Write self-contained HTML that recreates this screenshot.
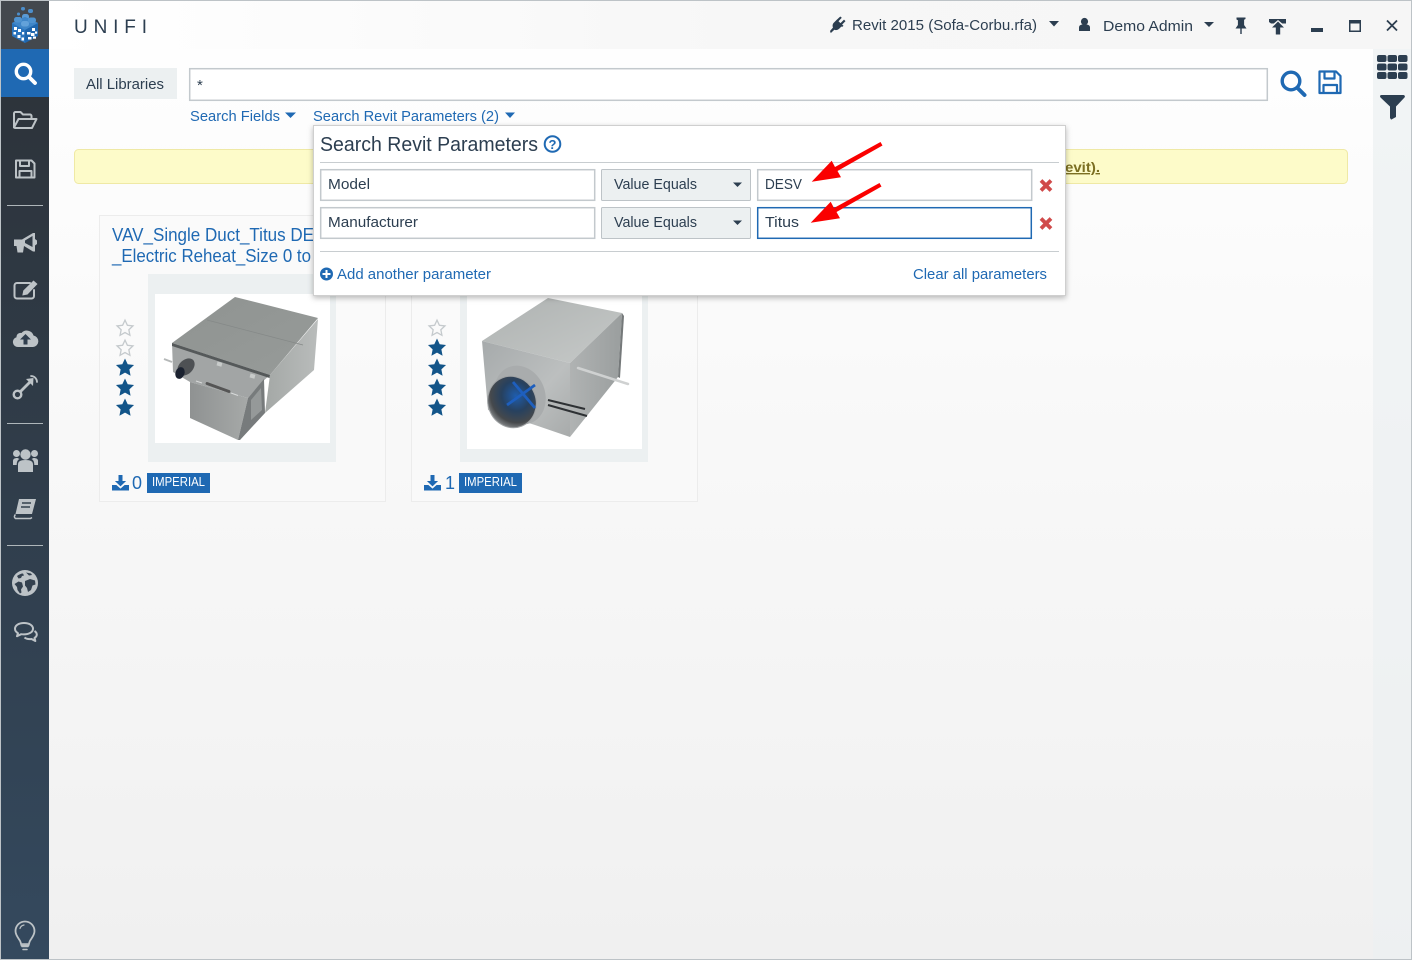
<!DOCTYPE html>
<html lang="en">
<head>
<meta charset="utf-8">
<title>UNIFI</title>
<style>
html,body{margin:0;padding:0;width:1412px;height:960px;overflow:hidden;background:#fff}
svg{display:block}
text{font-family:"Liberation Sans",sans-serif;white-space:pre}
</style>
</head>
<body>
<svg xmlns="http://www.w3.org/2000/svg" width="1412" height="960" viewBox="0 0 1412 960">
<defs>
<linearGradient id="bg" x1="0" y1="0" x2="0" y2="1"><stop offset="0" stop-color="#ffffff"/><stop offset="1" stop-color="#f0f0f0"/></linearGradient>
<linearGradient id="side" x1="0" y1="0" x2="0" y2="1"><stop offset="0" stop-color="#2c3137"/><stop offset="1" stop-color="#34495e"/></linearGradient>
<linearGradient id="top" x1="0" y1="0" x2="1" y2="0"><stop offset="0" stop-color="#ffffff"/><stop offset=".5" stop-color="#f7f7f7"/><stop offset="1" stop-color="#f6f6f6"/></linearGradient>
<linearGradient id="d1t" x1="0" y1="0" x2="1" y2="1"><stop offset="0" stop-color="#8f9391"/><stop offset="1" stop-color="#979b99"/></linearGradient>
<linearGradient id="d1r" x1="0" y1="0" x2="1" y2="0"><stop offset="0" stop-color="#a4a8a6"/><stop offset="1" stop-color="#b9bcbb"/></linearGradient>
<linearGradient id="d1f" x1="0" y1="0" x2="1" y2="0"><stop offset="0" stop-color="#8f9292"/><stop offset="1" stop-color="#a6a9a8"/></linearGradient>
<linearGradient id="d2t" x1="0" y1="0" x2="1" y2="1"><stop offset="0" stop-color="#aeb2b1"/><stop offset="1" stop-color="#c6c9c8"/></linearGradient>
<linearGradient id="d2l" x1="0" y1="0" x2="1" y2="1"><stop offset="0" stop-color="#a6aaab"/><stop offset=".6" stop-color="#bcbfbf"/><stop offset="1" stop-color="#a8abab"/></linearGradient>
<linearGradient id="d2r" x1="0" y1="0" x2="1" y2="0"><stop offset="0" stop-color="#b0b3b3"/><stop offset="1" stop-color="#9a9e9e"/></linearGradient>
<radialGradient id="d2h" cx=".62" cy=".42" r=".65"><stop offset="0" stop-color="#1f5dac"/><stop offset=".45" stop-color="#27415f"/><stop offset=".8" stop-color="#46494c"/><stop offset="1" stop-color="#85888a"/></radialGradient>
<filter id="sh" x="-3%" y="-5%" width="106%" height="112%"><feDropShadow dx="0" dy="2" stdDeviation="3" flood-color="#000" flood-opacity=".28"/></filter>
<polygon id="star" points="0,-9.5 2.7,-3.73 9.04,-2.94 4.37,1.43 5.58,7.69 0,4.6 -5.58,7.69 -4.37,1.43 -9.04,-2.94 -2.7,-3.73"/>
<g id="dl" fill="#1f69b3">
  <path d="M6.5 0h4v6h3.6L8.5 11.4 2.9 6h3.6z"/>
  <path d="M0 10h4.4l4.1 3.6L12.6 10H17v5.5H0z"/>
</g>
</defs>

<!-- page -->
<rect width="1412" height="960" fill="url(#bg)"/>
<rect x="49" y="1" width="1362" height="48" fill="url(#top)"/>
<rect x="1373" y="49" width="38" height="910" fill="#ecf0f1" opacity=".75"/>

<!-- sidebar -->
<rect x="1" y="1" width="48" height="958" fill="url(#side)"/>
<rect x="1" y="1" width="48" height="48" fill="#43484e"/>
<rect x="1" y="49" width="48" height="48" fill="#1f69b3"/>

<!-- logo -->
<g>
  <rect x="21" y="7" width="4" height="3.500" rx="1.700" fill="#4c8ecb"/>
  <rect x="28" y="9" width="5" height="4" rx="1.900" fill="#4c8ecb"/>
  <rect x="17" y="12.500" width="3" height="3" rx="1.400" fill="#4c8ecb"/>
  <rect x="22" y="14" width="7" height="6" rx="2.500" fill="#5a9ad4"/>
  <polygon points="25,17 38,23 38,36 25,43 12,36 12,23" fill="#2a74bd"/>
  <polygon points="25,17 38,23 25,30 12,23" fill="#3f86c8"/>
  <rect x="14" y="17" width="8" height="5.500" rx="2.500" fill="#4f93d0"/>
  <rect x="28" y="17.500" width="8" height="5.500" rx="2.500" fill="#4f93d0"/>
  <rect x="21" y="21" width="8" height="5.500" rx="2.500" fill="#63a2da"/>
  <polygon points="25,30 38,23 38,36 25,43" fill="#1f66ad"/>
  <g fill="#fff">
    <rect x="14" y="27" width="3" height="3"/><rect x="18" y="29" width="3" height="3"/><rect x="22" y="32" width="2.200" height="2.500"/>
    <rect x="13.500" y="32" width="2.500" height="2.500"/><rect x="17.500" y="35" width="3" height="3"/><rect x="21.500" y="37.500" width="2.500" height="3"/>
    <rect x="27" y="32" width="3.500" height="2.500"/><rect x="32" y="28" width="3" height="3"/><rect x="31" y="33" width="3.500" height="3"/>
    <rect x="35" y="31.500" width="2.200" height="2.200"/><rect x="28" y="37" width="3.500" height="2.500"/><rect x="33" y="36.500" width="3" height="2.200"/>
  </g>
</g>

<!-- search nav icon -->
<g fill="none" stroke="#fff">
  <circle cx="23.500" cy="71.500" r="7.200" stroke-width="3.400"/>
  <path d="M29 77l6 6" stroke-width="3.800" stroke-linecap="round"/>
</g>

<g fill="none" stroke="#bdc3c7" stroke-width="2" stroke-linejoin="round" stroke-linecap="round">
  <!-- folder -->
  <path d="M14 127V113.500a1.500 1.500 0 0 1 1.500-1.500h5l2.500 2.500h7a1.500 1.500 0 0 1 1.500 1.500V119"/>
  <path d="M14 127.500l4.500-8.500H36.500l-4.500 9H15z"/>
  <!-- save -->
  <path d="M16 160.500h15.500l3 3v14h-18.500z"/>
  <path d="M20 160.500v5.500h9v-5.500M19.500 177.500v-6.500h12v6.500"/>
  <!-- edit -->
  <path d="M30 283h-13a2.500 2.500 0 0 0-2.500 2.500v10.500a2.500 2.500 0 0 0 2.500 2.500h14.500a2.500 2.500 0 0 0 2.500-2.500v-6"/>
</g>
<!-- edit pencil -->
<path d="M33.500 280.500l4 3.500-10 10.500-5.200 1 1-5z" fill="#bdc3c7"/>
<!-- sidebar separators -->
<g fill="#bdc3c7" opacity=".9">
  <rect x="7" y="205" width="36" height="1"/><rect x="7" y="423" width="36" height="1"/><rect x="7" y="545" width="36" height="1"/>
</g>
<g fill="#bdc3c7">
  <!-- bullhorn -->
  <path d="M14 239.500h8l11-6.500h2v6l2 1.500v3.500l-2 1.500v6h-2l-9-5.500-1 6.500h-5.500l-1-6.500h-2.500z"/>
  <path d="M25 240.500l7.500-4.500v11l-7.500-4z" fill="#2f3a45"/>
  <!-- cloud -->
  <path d="M18 347a5 5 0 0 1-1.500-9.800 4 4 0 0 1 5-4.200 7 7 0 0 1 12 2.500 5.800 5.800 0 0 1-.5 11.500z"/>
  <path d="M25.500 334l5.500 5.500h-3.500v5h-4v-5H20z" fill="#2f3e4e"/>
  <!-- users -->
  <circle cx="25.500" cy="454.500" r="5.200"/><circle cx="16.500" cy="453.500" r="3.500"/><circle cx="34.500" cy="453.500" r="3.500"/>
  <path d="M18 472v-7.500c0-3 2.300-4.500 7.500-4.500s7.500 1.500 7.500 4.500V472z"/>
  <path d="M13 465v-4c0-2 1.500-3 4.500-3l2 1c-2 1-2.800 2.800-2.800 6zM38 465v-4c0-2-1.500-3-4.500-3l-2 1c2 1 2.800 2.800 2.800 6z"/>
  <!-- book -->
  <path d="M19 499h17l-4 15H15.500z"/>
  <path d="M15.500 514.500c-1.500 1.300-1.500 3 0 4h15l1.500-1" fill="none" stroke="#bdc3c7" stroke-width="1.500"/>
  <!-- globe -->
  <circle cx="25" cy="583" r="13"/>
</g>
<path d="M22 503h9M21 507h9" stroke="#34434f" stroke-width="1.500"/>
<g fill="#34414f">
  <path d="M17 576c2-1.500 4-2.500 6-2.500l1 2-2 .5-1 2-2.500.5zM26 572.500l5 1 1 1.500-3 .5zM14.500 584l4-2.500 3.500 1 1 4-2 3 .5 3-1.500 1-2.500-3.500-.5-3zM25 581l5-2 5 1.500.5 4-3 1-1.500 4.500-3 2-1-4-2-2.500z"/>
</g>
<!-- key / arrow link -->
<g fill="none" stroke="#bdc3c7" stroke-linecap="round" stroke-linejoin="round">
  <circle cx="17.500" cy="394.500" r="3.800" stroke-width="2.400"/>
  <path d="M21 391l9-9" stroke-width="2.800"/>
  <path d="M31 376a6 6 0 0 1 6 6" stroke-width="1.800"/>
</g>
<polygon points="33.500,378 33,386 26,379" fill="#bdc3c7"/>
<!-- comments -->
<g fill="none" stroke="#bdc3c7" stroke-width="2" stroke-linejoin="round">
  <path d="M24 623c-5.500 0-9 2.500-9 5.800 0 1.800 1 3.300 3 4.400l-1 3 4.200-2c1 .2 1.800.2 2.800.2 5.500 0 9-2.600 9-5.700s-3.500-5.700-9-5.700z"/>
  <path d="M34.500 631c1.500 1 2.300 2.200 2.300 3.500 0 1.500-1 2.700-2.300 3.500l.8 3-3.800-2c-3 .3-5.500-.2-7-1.500"/>
</g>
<!-- bulb -->
<g fill="none" stroke="#bdc3c7" stroke-linecap="round" transform="translate(0 1.500)">
  <path d="M21.500 944l-1-3.500c-.6-2.500-5-6-5-11a9.500 9.500 0 0 1 19 0c0 5-4.400 8.500-5 11l-1 3.500z" stroke-width="1.800"/>
  <path d="M20 927a5 5 0 0 1 4-3.500" stroke-width="1.200"/>
  <path d="M22 942.500h6M22 945h6M23 948h4" stroke-width="1.500"/>
</g>

<!-- window frame -->
<rect x=".5" y=".5" width="1411" height="959" fill="none" stroke="#bdc3c7"/>

<!-- header -->
<text x="74" y="33" font-size="19" fill="#2c3e50" textLength="73">UNIFI</text>
<g fill="#2c3e50">
  <!-- plug -->
  <path d="M830 31l3-3.500c-.8-2-.3-3.700 1-5l2.500-2.500 3.800-3.500 1.500 1.300-3.300 3.500 2 1.800 3.500-3.500 1.500 1.500-3.400 3.500 1.400 1.200-1 1-1.200-.2-2 2c-1.500 1.500-3.300 1.800-5 1.200l-3.500 3.300z"/>
  <polygon points="1049,21 1059,21 1054,26.500"/>
  <!-- user -->
  <circle cx="1084.500" cy="21.500" r="3.600"/>
  <path d="M1079 31v-3.500c0-2 1.800-3.200 5.500-3.200s5.500 1.200 5.500 3.200V31z"/>
  <polygon points="1204,22 1214,22 1209,27"/>
  <!-- pin -->
  <path d="M1236.500 17.500h9v1.500l-1.400.8V25l2.400 3.500H1235.500l2.400-3.500v-4.700l-1.400-.8z"/>
  <rect x="1240.300" y="28" width="1.400" height="6"/>
  <!-- push up -->
  <path d="M1269 19h17v4.500h-3.800l-4.200-3.500-4.200 3.500H1271l-2-1.500z"/>
  <path d="M1278 21.500l6 6h-3.800v7h-4.400v-7H1272z"/>
  <!-- minimize -->
  <rect x="1311" y="28" width="12" height="4"/>
  <!-- maximize -->
  <path d="M1349 20h12v12h-12zM1350.500 23.500v7h9v-7z" fill-rule="evenodd"/>
</g>
<path d="M1387 20.500l10 10M1397 20.500l-10 10" stroke="#2c3e50" stroke-width="1.800" fill="none"/>
<text x="852" y="30" font-size="15" fill="#2c3e50" textLength="185" lengthAdjust="spacingAndGlyphs">Revit 2015 (Sofa-Corbu.rfa)</text>
<text x="1103" y="31" font-size="15" fill="#2c3e50" textLength="90" lengthAdjust="spacingAndGlyphs">Demo Admin</text>

<!-- right strip -->
<g fill="#2c3e50">
  <rect x="1377" y="55" width="9.500" height="7" rx="2"/><rect x="1387.500" y="55" width="9.500" height="7" rx="2"/><rect x="1398" y="55" width="9.500" height="7" rx="2"/>
  <rect x="1377" y="63.500" width="9.500" height="7" rx="2"/><rect x="1387.500" y="63.500" width="9.500" height="7" rx="2"/><rect x="1398" y="63.500" width="9.500" height="7" rx="2"/>
  <rect x="1377" y="72" width="9.500" height="7" rx="2"/><rect x="1387.500" y="72" width="9.500" height="7" rx="2"/><rect x="1398" y="72" width="9.500" height="7" rx="2"/>
  <path d="M1380 96.500a1.500 1.500 0 0 1 1.500-1.500h22a1.500 1.500 0 0 1 1 2.500l-8.500 9v10.500l-4.500 2.500h-.5l-1-1.500v-11.500l-9.500-9z"/>
</g>

<!-- search row -->
<rect x="74" y="68" width="103" height="31" fill="#ecf0f1"/>
<text x="86" y="89" font-size="15" fill="#2c3e50" textLength="78" lengthAdjust="spacingAndGlyphs">All Libraries</text>
<rect x="189.700" y="68.700" width="1077.600" height="31.600" fill="#fff" stroke="#c3c9cd" stroke-width="1.500"/>
<text x="197" y="90" font-size="15" fill="#2c3e50">*</text>
<g fill="none" stroke="#1f69b3">
  <circle cx="1291" cy="81" r="8.800" stroke-width="3.400"/>
  <path d="M1297.500 88l7 7" stroke-width="4" stroke-linecap="round"/>
  <g stroke-width="2.200" stroke-linejoin="round">
    <path d="M1319.500 71.500h16.500l4.500 4.500v17h-21z"/>
    <path d="M1324.500 71.500v7h10v-7M1323.500 93v-8h13.500v8"/>
  </g>
</g>
<text x="190" y="121" font-size="15" fill="#1f69b3" textLength="90" lengthAdjust="spacingAndGlyphs">Search Fields</text>
<polygon points="285,112.500 296,112.500 290.500,118" fill="#1f69b3"/>
<text x="313" y="121" font-size="15" fill="#1f69b3" textLength="186" lengthAdjust="spacingAndGlyphs">Search Revit Parameters (2)</text>
<polygon points="505,112.500 515,112.500 510,118" fill="#1f69b3"/>

<!-- notice -->
<rect x="74.500" y="149.500" width="1273" height="34" rx="4" fill="#fdfbc9" stroke="#efe9a5"/>
<text x="1065" y="172" font-size="14" font-weight="700" fill="#7c6f22" text-decoration="underline" textLength="35" lengthAdjust="spacingAndGlyphs">evit).</text>

<!-- card 1 -->
<rect x="99.500" y="215.500" width="286" height="286" fill="#f9f9f9" fill-opacity=".7" stroke="#ececec"/>
<text x="112" y="241" font-size="18" fill="#1f69b3" textLength="202" lengthAdjust="spacingAndGlyphs">VAV_Single Duct_Titus DE</text>
<text x="112" y="262" font-size="18" fill="#1f69b3" textLength="199" lengthAdjust="spacingAndGlyphs">_Electric Reheat_Size 0 to</text>
<rect x="148" y="274" width="188" height="188" fill="#ecf0f1"/>
<rect x="155" y="294" width="175" height="149" fill="#fff"/>
<g>
  <polygon points="235,297 318,318 270,375 172,343" fill="url(#d1t)"/>
  <polygon points="318,319 270,375 265,413 314,370" fill="url(#d1r)"/>
  <polygon points="172,343 270,375 262,382 248,398 190,382 173,372" fill="#a2a5a5"/>
  <polygon points="172,343 270,375 269.500,378 172,346" fill="#55595a"/>
  <polygon points="190,382 248,398 238,440 190,418" fill="url(#d1f)"/>
  <polygon points="248,398 264,379 265,413 240,440 238,440" fill="#777b7c"/>
  <polygon points="251,400 261,388 262,410 251,420" fill="#959999"/>
  <path d="M207 383.500l22 8" stroke="#555" stroke-width="2.800" stroke-linecap="round"/>
  <path d="M196 381l6 2M231 393l7 2.500" stroke="#d8dada" stroke-width="1"/>
  <ellipse cx="186" cy="367" rx="7" ry="10" transform="rotate(45 186 367)" fill="#4e5154"/>
  <ellipse cx="180" cy="373" rx="4.500" ry="6" transform="rotate(20 180 373)" fill="#1b2230"/>
  <path d="M164 359l8 3" stroke="#b5b8b8" stroke-width="2"/>
  <rect x="217" y="362" width="5" height="4" fill="#c8cbca" transform="rotate(15 219 364)"/>
  <rect x="250" y="374" width="5" height="4" fill="#c8cbca" transform="rotate(15 252 376)"/>
  <path d="M207 320l96 25" stroke="#858988" stroke-width=".8"/>
</g>
<g fill="#135589">
  <use href="#star" x="125" y="368"/><use href="#star" x="125" y="388"/><use href="#star" x="125" y="408"/>
</g>
<g fill="#fafafa" stroke="#c5cacd" stroke-width="1.500">
  <use href="#star" transform="translate(125 328.500) scale(.88)"/><use href="#star" transform="translate(125 348.500) scale(.88)"/>
</g>
<use href="#dl" x="112" y="475"/>
<text x="132" y="489" font-size="18" fill="#1f69b3">0</text>
<rect x="147" y="473" width="63" height="20" fill="#1f69b3"/>
<text x="152" y="486" font-size="13" fill="#fff" textLength="53" lengthAdjust="spacingAndGlyphs">IMPERIAL</text>

<!-- card 2 -->
<rect x="411.500" y="215.500" width="286" height="286" fill="#f9f9f9" fill-opacity=".7" stroke="#ececec"/>
<rect x="460" y="274" width="188" height="188" fill="#ecf0f1"/>
<rect x="467" y="280" width="175" height="169" fill="#fff"/>
<g>
  <polygon points="548,298 622,313 570,363 482,341" fill="url(#d2t)"/>
  <polygon points="622,313 570,363 570,437 618,377" fill="url(#d2r)"/>
  <polygon points="622,313 624,316 620,378 618,377" fill="#75797a"/>
  <polygon points="482,341 570,363 570,437 535,425 488,410" fill="url(#d2l)"/>
  <path d="M578 368l50 16" stroke="#cfd1d1" stroke-width="2.500" stroke-linecap="round"/>
  <path d="M548 400l37 9M548 405l39 11" stroke="#2e3134" stroke-width="2" fill="none"/>
  <ellipse cx="520" cy="395" rx="25" ry="30" transform="rotate(-22 520 395)" fill="#a9acad"/>
  <ellipse cx="512" cy="402" rx="24" ry="26" transform="rotate(-22 512 402)" fill="url(#d2h)" stroke="#a0a3a5" stroke-width="1"/>
  <path d="M507 405l28-20M513 382l22 26" stroke="#1e5fbe" stroke-width="2.800" fill="none"/>
</g>
<g fill="#135589">
  <use href="#star" x="437" y="348"/><use href="#star" x="437" y="368"/><use href="#star" x="437" y="388"/><use href="#star" x="437" y="408"/>
</g>
<g fill="#fafafa" stroke="#c5cacd" stroke-width="1.500"><use href="#star" transform="translate(437 328.500) scale(.88)"/></g>
<use href="#dl" x="424" y="475"/>
<text x="445" y="489" font-size="18" fill="#1f69b3">1</text>
<rect x="459" y="473" width="63" height="20" fill="#1f69b3"/>
<text x="464" y="486" font-size="13" fill="#fff" textLength="53" lengthAdjust="spacingAndGlyphs">IMPERIAL</text>

<!-- popup -->
<rect x="313.500" y="125.500" width="752" height="170" fill="#fff" stroke="#cfcfcf" filter="url(#sh)"/>
<text x="320" y="151" font-size="20" fill="#2c3e50" textLength="218" lengthAdjust="spacingAndGlyphs">Search Revit Parameters</text>
<circle cx="552.500" cy="144" r="7.800" fill="none" stroke="#1f69b3" stroke-width="2"/>
<text x="552.500" y="149" font-size="13" font-weight="700" fill="#1f69b3" text-anchor="middle">?</text>
<rect x="320" y="162" width="739" height="1" fill="#c8cdd0"/>

<g fill="#fff" stroke="#c3c9cd" stroke-width="1.500">
  <rect x="320.700" y="169.700" width="274" height="30.600"/>
  <rect x="320.700" y="207.700" width="274" height="30.600"/>
  <rect x="757.700" y="169.700" width="274" height="30.600"/>
</g>
<rect x="757.700" y="207.700" width="273.600" height="30.600" fill="#fff" stroke="#1f69b3" stroke-width="1.500"/>
<g fill="#ecf0f1" stroke="#bdc3c7" stroke-width="1">
  <rect x="601.500" y="169.500" width="149" height="31" rx="1"/>
  <rect x="601.500" y="207.500" width="149" height="31" rx="1"/>
</g>
<g font-size="15" fill="#2c3e50">
  <text x="328" y="189" textLength="42" lengthAdjust="spacingAndGlyphs">Model</text>
  <text x="328" y="227" textLength="90" lengthAdjust="spacingAndGlyphs">Manufacturer</text>
  <text x="614" y="189" textLength="83" lengthAdjust="spacingAndGlyphs">Value Equals</text>
  <text x="614" y="227" textLength="83" lengthAdjust="spacingAndGlyphs">Value Equals</text>
  <text x="765" y="189" textLength="37" lengthAdjust="spacingAndGlyphs">DESV</text>
  <text x="765" y="227" textLength="34" lengthAdjust="spacingAndGlyphs">Titus</text>
</g>
<polygon points="733,182.500 742,182.500 737.500,187" fill="#2c3e50"/>
<polygon points="733,220.500 742,220.500 737.500,225" fill="#2c3e50"/>
<g stroke="#d04a4a" stroke-width="3.800" fill="none">
  <path d="M1041 180.500l10 10M1051 180.500l-10 10"/>
  <path d="M1041 218.500l10 10M1051 218.500l-10 10"/>
</g>
<rect x="320" y="251" width="739" height="1" fill="#c8cdd0"/>
<circle cx="326.500" cy="274" r="6.500" fill="#1f69b3"/>
<path d="M326.500 270v8M322.500 274h8" stroke="#fff" stroke-width="2"/>
<text x="337" y="279" font-size="15" fill="#1f69b3" textLength="154" lengthAdjust="spacingAndGlyphs">Add another parameter</text>
<text x="913" y="279" font-size="15" fill="#1f69b3" textLength="134" lengthAdjust="spacingAndGlyphs">Clear all parameters</text>

<!-- red arrows -->
<g fill="#fa0000">
  <polygon points="811.700,181.700 831.700,160.700 835,167 880.500,142 882.500,145.500 837.500,171 841,177.300"/>
  <polygon points="810.700,222.700 830.700,201.700 834,208 879.500,183 881.500,186.500 836.500,212 840,218.300"/>
</g>
</svg>
</body>
</html>
